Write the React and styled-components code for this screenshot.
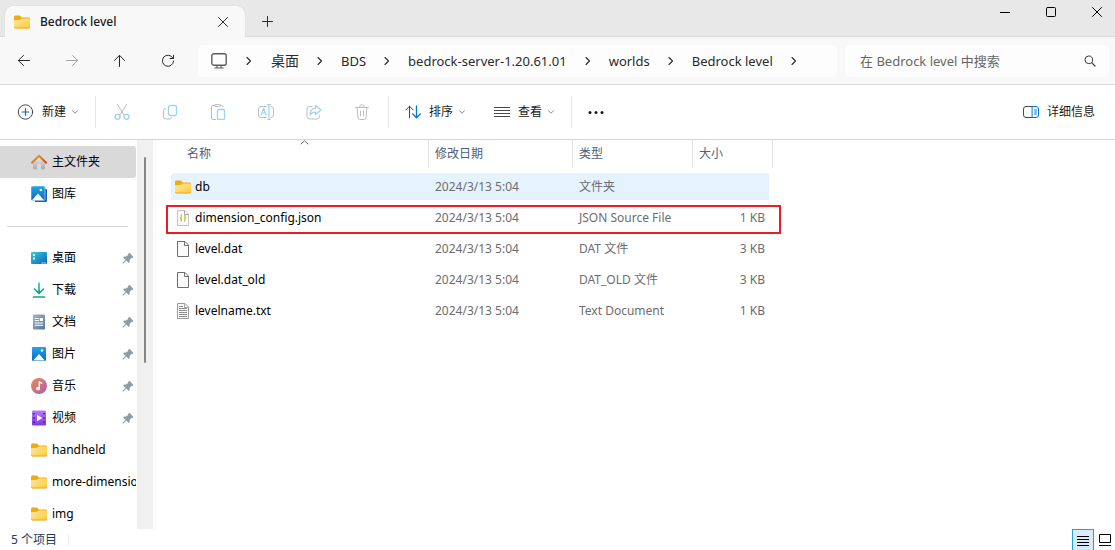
import React from "react";
import styled, { createGlobalStyle, css } from "styled-components";

const GlobalStyle = createGlobalStyle`
    * {
        box-sizing: border-box;
    }
    body {
        margin: 0;
        background: #fff;
        font-family: "Noto Sans", "Noto Sans CJK SC", sans-serif;
        font-size: 12px;
        line-height: 16px;
        color: #000;
    }
    button, input {
        font: inherit;
        color: inherit;
    }
    button {
        border: 0;
        padding: 0;
        background: none;
    }
    a {
        color: inherit;
        text-decoration: none;
    }
    svg {
        display: block;
        flex-shrink: 0;
    }
`

const Window = styled.div`
    display: flex;
    flex-direction: column;
    height: 100vh;
    overflow: hidden;
`

/* title bar */
const TitleBar = styled.header`
    display: flex;
    align-items: flex-end;
    height: 37px;
    flex-shrink: 0;
    padding-left: 5px;
    background: #e8e8e8;
    box-shadow: inset 0 -1px #dadada;
`
const Tab = styled.div`
    display: flex;
    align-items: center;
    width: 240px;
    height: 31px;
    padding: 0 16px 0 9px;
    background: #f8f8f8;
    border-radius: 8px 8px 0 0;
    box-shadow: 0 0 1px #b8b8b8;
`
const TabTitle = styled.span`
    flex: 1;
    margin-left: 10px;
    font-weight: 500;
    color: #1a1a1a;
`
const SquareButton = styled.button`
    display: flex;
    align-items: center;
    justify-content: center;
    width: 12px;
    height: 12px;
    color: #2b2b2b;
`
const NewTabButton = styled(SquareButton)`
    width: 45px;
    height: 31px;
`
const WindowControls = styled.div`
    display: flex;
    align-self: flex-start;
    gap: 10px;
    margin-left: auto;
`
const ControlButton = styled(SquareButton)`
    width: 36px;
    height: 24px;
    color: #000;
`

/* navigation */
const NavBar = styled.nav`
    display: flex;
    align-items: center;
    height: 48px;
    flex-shrink: 0;
    padding-right: 6px;
    background: #f8f8f8;
    border-bottom: 1px solid #dadada;
`
const NavButton = styled(SquareButton)`
    width: 48px;
    height: 32px;
    color: ${props => props.disabled ? "#a3a3a3" : "#2b2b2b"};
`
const AddressBar = styled.div`
    display: flex;
    align-items: center;
    flex: 1;
    height: 32px;
    margin: 0 8px 0 6px;
    padding-left: 13px;
    background: #fdfdfd;
    border-radius: 5px;
    color: #2a2a2a;
`
const Crumb = styled.a`
    font-size: ${props => props.$cjk ? 14 : 13}px;
    line-height: 20px;
    white-space: nowrap;
`
const CrumbArrow = styled.span`
    display: flex;
    justify-content: center;
    width: ${props => props.$first ? 44 : 42}px;
`
const SearchBox = styled.label`
    display: flex;
    align-items: center;
    width: 264px;
    height: 32px;
    padding: 0 13px 0 15px;
    background: #fdfdfd;
    border-radius: 5px;
`
const SearchInput = styled.input`
    flex: 1;
    min-width: 0;
    padding: 0;
    border: 0;
    outline: 0;
    background: none;
    font-size: 13px;
    line-height: 20px;
    &::placeholder {
        color: #666;
        opacity: 1;
    }
`

/* command bar */
const Toolbar = styled.div`
    display: flex;
    align-items: center;
    height: 55px;
    flex-shrink: 0;
    border-bottom: 1px solid #d6d6d6;
    color: #1a1a1a;
`
const ToolButton = styled.button`
    display: flex;
    align-items: center;
    gap: 8px;
    height: 32px;
    padding: 0 ${props => props.$right || 16}px 0 16px;
    white-space: nowrap;
`
const ToolGroup = styled.div`
    display: flex;
    padding: 0 2px;
`
const ToolIcon = styled(SquareButton)`
    width: 48px;
    height: 32px;
`
const Caret = styled.span`
    display: flex;
    margin-left: -2px;
`
const ToolDivider = styled.span`
    width: 1px;
    height: 32px;
    background: #e8e8e8;
`
const Spacer = styled.span`
    flex: 1;
`

/* body */
const Body = styled.div`
    display: flex;
    flex: 1;
    min-height: 0;
`
const Sidebar = styled.aside`
    display: flex;
    width: 156px;
    flex-shrink: 0;
    overflow: hidden;
    border-right: 1px solid #f5f5f5;
`
const SideList = styled.nav`
    width: 137px;
    padding: 6px 1px 0 0;
    overflow: hidden;
`
const SideItem = styled.a`
    display: flex;
    align-items: center;
    gap: 5px;
    height: 32px;
    padding-left: 31px;
    border-radius: 0 3px 3px 0;
    overflow: hidden;
    white-space: nowrap;
    ${props => props.$active && css`
        background: #d9d9d9;
    `}
`
const Pin = styled.span`
    margin-left: auto;
    padding-right: 2px;
`
const SideRule = styled.hr`
    height: 1px;
    margin: 16px 8px 15px 7px;
    border: 0;
    background: #d4d4d4;
`
const ScrollTrack = styled.div`
    width: 16px;
    padding: 17px 7px 0;
    background: #f0f0f0;
`
const ScrollThumb = styled.div`
    height: 206px;
    background: #868686;
    border-radius: 1px;
`

const Content = styled.main`
    flex: 1;
    min-width: 0;
    padding-left: 15px;
`
const FileTable = styled.table`
    width: 602px;
    table-layout: fixed;
    border-spacing: 0;
`
const HeadCell = styled.th`
    height: 33px;
    padding: 0 0 5px;
    width: ${props => props.$width}px;
    font-weight: 400;
    text-align: left;
    color: #4c607a;
`
const HeadLabel = styled.div`
    position: relative;
    height: 28px;
    padding-left: ${props => props.$indent || 6}px;
    line-height: 28px;
    border-right: 1px solid #e2e2e2;
`
const SortMark = styled.span`
    position: absolute;
    top: 0;
    left: 50%;
`
const FileRow = styled.tr`
    position: relative;
    td {
        background: ${props => props.$selected ? "#e5f3ff" : "transparent"};
        background-clip: padding-box;
    }
`
const Cell = styled.td`
    height: 31px;
    padding: 0 6px;
    border-bottom: 4px solid transparent;
    color: #6d6d6d;
    white-space: nowrap;
`
const NameCell = styled(Cell)`
    padding: 0 4px;
    color: #000;
    border-radius: 3px 0 0 3px;
`
const SizeCell = styled(Cell)`
    padding: 0 4px;
    border-right: 4px solid transparent;
    text-align: right;
`
const FileName = styled.span`
    display: flex;
    align-items: center;
    gap: 4px;
`
const Highlight = styled.span`
    position: absolute;
    inset: 1px -8px 1px -5px;
    border: 2px solid #ec1c24;
`

/* status bar */
const StatusBar = styled.footer`
    display: flex;
    align-items: center;
    height: 21px;
    flex-shrink: 0;
    padding-left: 11px;
    color: #1e395b;
`
const StatusDivider = styled.span`
    width: 1px;
    height: 11px;
    margin: 0 auto 0 11px;
    background: #ececec;
`
const ViewButton = styled(SquareButton)`
    width: 21px;
    height: 21px;
    color: #000;
    ${props => props.$active && css`
        width: 22px;
        background: #d9ebf7;
        border: 1px solid #26a0da;
        border-bottom: 0;
    `}
`

const Icon = ({ size = 16, width, height, children, ...rest }) => (
    <svg
        width={width || size}
        height={height || size}
        viewBox={`0 0 ${width || size} ${height || size}`}
        fill="none"
        stroke="currentColor"
        strokeLinecap="round"
        strokeLinejoin="round"
        aria-hidden="true"
        {...rest}
    >
        {children}
    </svg>
)

const FolderIcon = () => (
    <Icon stroke="none">
        <path d="M0 3a1.4 1.4 0 0 1 1.4-1.4H6L7.8 3.4H14.6A1.4 1.4 0 0 1 16 4.8V7H0z" fill="#f0ab0c" />
        <path d="M0 6.2 6.2 5.8 7.8 4.4H14.8A1.2 1.2 0 0 1 16 5.6V13a1.4 1.4 0 0 1-1.4 1.4H1.4A1.4 1.4 0 0 1 0 13z" fill="url(#folderFill)" />
        <path d="M.4 13.3c.3.5.6.7 1 .7h13.2c.4 0 .8-.2 1-.7" stroke="#e9a81c" strokeWidth="0.9" />
    </Icon>
)

const CloseIcon = () => (
    <Icon size={10}><path d="M.5.5l9 9M9.5.5l-9 9" /></Icon>
)

const ChevronRight = () => (
    <Icon width={6} height={10}><path d="M1 1.5 4.5 5 1 8.500" strokeWidth="1.1" /></Icon>
)

const ChevronDown = () => (
    <Icon size={6} stroke="#8a8a8a"><path d="M.5 1.800 3 4.2 5.5 1.8" /></Icon>
)

const PinIcon = () => (
    <Icon size={12} stroke="none" fill="#8f9aa3">
        <path d="M7.3.8 11.4 4.9 10.6 5.9 9.8 5.8 7.7 8 7.5 10.2 6.7 10.9 4.3 8.6 1.3 11.5.5 11.5.6 10.7 3.5 7.7 1.3 5.4 2 4.6 4.3 4.4 6.4 2.4 6.3 1.6z" />
    </Icon>
)

const HomeIcon = () => (
    <Icon stroke="none">
        <path d="M2 7.5 8 2.2l6 5.300V14a1.2 1.2 0 0 1-1.2 1.2H10V10.5a1 1 0 0 0-1-1H7a1 1 0 0 0-1 1v4.7H3.2A1.2 1.2 0 0 1 2 14z" fill="url(#homeFill)" />
        <path d="M.9 8.7 8 1.7l7.1 7" fill="none" stroke="url(#roofFill)" strokeWidth="1.9" />
    </Icon>
)

const GalleryIcon = () => (
    <Icon stroke="none">
        <path d="M3 2.5h11.5a1.5 1.5 0 0 1 1.5 1.5v10.5a1.5 1.5 0 0 1-1.5 1.5H4z" fill="#1c5fb4" />
        <rect width="14" height="14.5" rx="1.2" fill="url(#blueFill)" stroke="#fff" strokeWidth="0.5" />
        <path d="M1.2 14 7 7.6l5.8 6.4z" fill="#fff" />
        <circle cx="9.8" cy="4" r="1.2" fill="#fff" />
    </Icon>
)

const DesktopIcon = () => (
    <Icon stroke="none">
        <rect y="2" width="16" height="12" rx="1" fill="url(#deskFill)" />
        <path d="M2 4h2v2H2zM2 7.5h2v2H2z" fill="#fff" />
        <path d="M11 13h1.2M13.3 13h1.2" stroke="#fff" strokeWidth="0.8" />
    </Icon>
)

const DownloadIcon = () => (
    <Icon stroke="url(#downFill)" strokeWidth="1.7">
        <path d="M8.01 1v10M3.5 7 8 11.400 12.5 7" />
        <path d="M2.5 15H13.5" stroke="#10a67c" />
    </Icon>
)

const DocsIcon = () => (
    <Icon stroke="none">
        <rect x="2" y="0.5" width="12" height="15" rx="1.2" fill="url(#docFill)" />
        <path d="M4.200 4.5H7.5M4.2 6.5H7.5M4.2 9h7.6M4.2 11.2h7.6" stroke="#fff" strokeWidth="1.1" />
        <rect x="8.8" y="4" width="3.2" height="3" fill="#fff" />
    </Icon>
)

const PicturesIcon = () => (
    <Icon stroke="none">
        <rect x="1" y="1" width="14" height="14" rx="1.2" fill="url(#blueFill)" />
        <path d="M2.2 14.5 8 8l5.8 6.5z" fill="#fff" />
        <circle cx="11" cy="4.5" r="1.2" fill="#fff" />
    </Icon>
)

const MusicIcon = () => (
    <Icon stroke="none">
        <circle cx="8" cy="8" r="8" fill="url(#musicFill)" />
        <circle cx="7" cy="10.6" r="1.9" fill="#fff" />
        <path d="M8.3 10.6V3.8l2.5 1.4" stroke="#fff" strokeWidth="1.4" />
    </Icon>
)

const VideoIcon = () => (
    <Icon stroke="none">
        <rect x="1" y="0.5" width="14" height="15" rx="1.2" fill="url(#videoFill)" />
        <path d="M3 3v11M13 3v11" stroke="#4c1d95" strokeWidth="1.6" strokeDasharray="1.6 2.6" strokeLinecap="butt" />
        <path d="M6 4.8 11.3 8 6 11.2z" fill="#fff" />
    </Icon>
)

const FileIcon = ({ kind }) => {
    if (kind === "folder") return <FolderIcon />
    return (
        <Icon strokeLinejoin="miter" strokeLinecap="butt">
            <path
                d="M2.5.5H10L13.5 4V15.5H2.5z"
                fill="#fbfbfb"
                stroke={kind === "json" ? "#c3c3c3" : kind === "text" ? "#9a9a9a" : "#6e6e6e"}
            />
            <path d="M9.5.5V4.5H13.5" stroke={kind === "file" ? "#6e6e6e" : "#a8a8a8"} />
            {kind === "json" && (
                <path d="M7 5H6.2V7.2L5.5 8 6.2 8.8V11H7M9 5H9.8V7.2L10.5 8 9.8 8.8V11H9" stroke="#b8bf3c" strokeWidth="1.2" />
            )}
            {kind === "text" && (
                <path d="M4 3.5H8M4 5.5H12M4 7.5H12M4 9.5H12M4 11.5H12M4 13.5H12" stroke="#8c8c8c" />
            )}
        </Icon>
    )
}

const Gradients = () => (
    <svg width="0" height="0" style={{ position: "absolute" }} aria-hidden="true">
        <defs>
            <linearGradient id="folderFill" x1="0" y1="0" x2="1" y2="1">
                <stop stopColor="#ffe9a4" />
                <stop offset="1" stopColor="#ffc937" />
            </linearGradient>
            <linearGradient id="homeFill" x1="0" y1="0" x2="0" y2="1">
                <stop stopColor="#ececec" />
                <stop offset="1" stopColor="#a9a9a9" />
            </linearGradient>
            <linearGradient id="roofFill" x1="0" y1="0" x2="1" y2="1">
                <stop stopColor="#f9a11b" />
                <stop offset="1" stopColor="#c9481c" />
            </linearGradient>
            <linearGradient id="blueFill" x1="0" y1="0" x2="0" y2="1">
                <stop stopColor="#22a3ea" />
                <stop offset="1" stopColor="#0b6bc0" />
            </linearGradient>
            <linearGradient id="deskFill" x1="0" y1="0" x2="1" y2="1">
                <stop stopColor="#2fd0e0" />
                <stop offset="1" stopColor="#0c62b8" />
            </linearGradient>
            <linearGradient id="downFill" gradientUnits="userSpaceOnUse" x1="0" y1="1" x2="0" y2="15">
                <stop stopColor="#2ed3a0" />
                <stop offset="1" stopColor="#0a8a72" />
            </linearGradient>
            <linearGradient id="docFill" x1="0" y1="0" x2="1" y2="1">
                <stop stopColor="#9fb4c9" />
                <stop offset="1" stopColor="#56779b" />
            </linearGradient>
            <linearGradient id="musicFill" x1="0" y1="0" x2="1" y2="1">
                <stop stopColor="#f28a4f" />
                <stop offset="1" stopColor="#a95bb5" />
            </linearGradient>
            <linearGradient id="videoFill" x1="0" y1="0" x2="0" y2="1">
                <stop stopColor="#b57af5" />
                <stop offset="1" stopColor="#7f38dc" />
            </linearGradient>
        </defs>
    </svg>
)

const crumbs = ["桌面", "BDS", "bedrock-server-1.20.61.01", "worlds", "Bedrock level"]

const places = [
    { name: "桌面", icon: <DesktopIcon />, pinned: true },
    { name: "下载", icon: <DownloadIcon />, pinned: true },
    { name: "文档", icon: <DocsIcon />, pinned: true },
    { name: "图片", icon: <PicturesIcon />, pinned: true },
    { name: "音乐", icon: <MusicIcon />, pinned: true },
    { name: "视频", icon: <VideoIcon />, pinned: true },
    { name: "handheld", icon: <FolderIcon /> },
    { name: "more-dimensions", icon: <FolderIcon /> },
    { name: "img", icon: <FolderIcon /> },
]

const files = [
    { name: "db", kind: "folder", type: "文件夹", size: "", selected: true },
    { name: "dimension_config.json", kind: "json", type: "JSON Source File", size: "1 KB", marked: true },
    { name: "level.dat", kind: "file", type: "DAT 文件", size: "3 KB" },
    { name: "level.dat_old", kind: "file", type: "DAT_OLD 文件", size: "3 KB" },
    { name: "levelname.txt", kind: "text", type: "Text Document", size: "1 KB" },
]

const blue = "#9fd0f5"
const grey = "#bdbdbd"

const fileActions = [
    {
        label: "剪切",
        icon: (
            <Icon stroke={grey}>
                <path d="M3.5.5 10 11M12.5.5 6 11" />
                <circle cx="3.5" cy="12.8" r="2.5" stroke={blue} strokeWidth="1.3" />
                <circle cx="12.5" cy="12.8" r="2.5" stroke={blue} strokeWidth="1.3" />
            </Icon>
        ),
    },
    {
        label: "复制",
        icon: (
            <Icon stroke={grey}>
                <path d="M3.5 4.5a2 2 0 0 0-2 2v6a2.5 2.5 0 0 0 2.5 2.5H8a2 2 0 0 0 1.8-1.5" />
                <rect x="6.5" y="1.5" width="8" height="10" rx="2" stroke={blue} strokeWidth="1.3" />
            </Icon>
        ),
    },
    {
        label: "粘贴",
        icon: (
            <Icon stroke={grey}>
                <path d="M5 1.5H3a1.5 1.5 0 0 0-1.5 1.5V14a1.5 1.5 0 0 0 1.5 1.5H5.5M10 1.5h1.5A1.5 1.5 0 0 1 13 3" />
                <rect x="4.5" y="0.5" width="6" height="2" rx="1" />
                <rect x="7.5" y="5.5" width="7" height="10" rx="1.3" stroke={blue} strokeWidth="1.3" />
            </Icon>
        ),
    },
    {
        label: "重命名",
        icon: (
            <Icon stroke={grey}>
                <path d="M8.5 2.5H3a2.5 2.5 0 0 0-2.5 2.5v6A2.5 2.5 0 0 0 3 13.5H8.5M13 2.5a2.5 2.5 0 0 1 2.5 2.5v6a2.5 2.5 0 0 1-2.5 2.5" />
                <path d="M3 11 5.6 4.5 8.2 11M4 9H7.3M9.5.5H12.5M11 .5V15.5M9.5 15.5H12.5" stroke={blue} strokeWidth="1.2" />
            </Icon>
        ),
    },
    {
        label: "共享",
        icon: (
            <Icon stroke={grey}>
                <path d="M6 2.5H3.5A2.5 2.5 0 0 0 1 5v7.5A2.5 2.5 0 0 0 3.5 15H11a2.5 2.5 0 0 0 2.5-2.5V11.5" />
                <path d="M9.5 1.5 15 6 9.5 10.5V8C7 8 5.3 8.8 4 11 4 7 6 4.5 9.5 4.2z" stroke={blue} strokeWidth="1.2" />
            </Icon>
        ),
    },
    {
        label: "删除",
        icon: (
            <Icon stroke={grey}>
                <path d="M1.5 3.5H14.5M5.5 3.2a2.5 2.5 0 0 1 5 0M3 3.5 4 13.8A1.8 1.8 0 0 0 5.8 15.5H10.2A1.8 1.8 0 0 0 12 13.8L13 3.5M6.5 7V12M9.5 7V12" />
            </Icon>
        ),
    },
]

const App = () => {
    return (
        <Window>
            <GlobalStyle />
            <Gradients />
            <TitleBar>
                <Tab>
                    <FolderIcon />
                    <TabTitle>Bedrock level</TabTitle>
                    <SquareButton aria-label="关闭标签页"><CloseIcon /></SquareButton>
                </Tab>
                <NewTabButton aria-label="新标签页">
                    <Icon size={11}><path d="M5.5.5V10.5M.5 5.5H10.5" /></Icon>
                </NewTabButton>
                <WindowControls>
                    <ControlButton aria-label="最小化">
                        <Icon size={10}><path d="M0 5.5H10" strokeLinecap="butt" /></Icon>
                    </ControlButton>
                    <ControlButton aria-label="最大化">
                        <Icon size={10}><rect x="0.5" y="0.5" width="9" height="9" rx="1" /></Icon>
                    </ControlButton>
                    <ControlButton aria-label="关闭"><CloseIcon /></ControlButton>
                </WindowControls>
            </TitleBar>

            <NavBar>
                <NavButton aria-label="后退">
                    <Icon><path d="M13.5 7.5H2.5M7.5 2.5 2.3 7.5 7.500 12.5" /></Icon>
                </NavButton>
                <NavButton aria-label="前进" disabled>
                    <Icon><path d="M2.5 7.5H13.5M8.5 2.5 13.7 7.5 8.5 12.5" /></Icon>
                </NavButton>
                <NavButton aria-label="上移">
                    <Icon><path d="M7.5 13.5V2.5M2.5 7.500 7.5 2.3 12.5 7.5" /></Icon>
                </NavButton>
                <NavButton aria-label="刷新">
                    <Icon><path d="M13 5.2A5.6 5.6 0 1 0 13.6 8M13.5 2.2V5.5H10" /></Icon>
                </NavButton>
                <AddressBar>
                    <Icon stroke="#5c5c5c">
                        <rect x="0.8" y="0.8" width="14.4" height="11.4" rx="2" strokeWidth="1.4" />
                        <path d="M6 12.5V14.5M10 12.5V14.5M3.8 15H12.2" strokeWidth="1.2" />
                    </Icon>
                    <CrumbArrow $first><ChevronRight /></CrumbArrow>
                    {crumbs.map(name => (
                        <React.Fragment key={name}>
                            <Crumb href="#" $cjk={name === "桌面"}>{name}</Crumb>
                            <CrumbArrow><ChevronRight /></CrumbArrow>
                        </React.Fragment>
                    ))}
                </AddressBar>
                <SearchBox>
                    <SearchInput type="text" aria-label="搜索" placeholder="在 Bedrock level 中搜索" />
                    <Icon size={12} stroke="#3c3c3c">
                        <circle cx="4.8" cy="4.8" r="3.8" />
                        <path d="M7.6 7.6 11 11" strokeWidth="1.2" />
                    </Icon>
                </SearchBox>
            </NavBar>

            <Toolbar>
                <ToolButton $right={17}>
                    <Icon stroke="#4a4a4a" width={18} height={16}>
                        <circle cx="9.5" cy="8" r="7.2" />
                        <path d="M9.5 4.7V11.3M6.2 8H12.8" stroke="#0f6cbd" strokeWidth="1.2" />
                    </Icon>
                    新建
                    <Caret><ChevronDown /></Caret>
                </ToolButton>
                <ToolDivider />
                <ToolGroup>
                    {fileActions.map(action => (
                        <ToolIcon key={action.label} aria-label={action.label} disabled>{action.icon}</ToolIcon>
                    ))}
                </ToolGroup>
                <ToolDivider />
                <ToolButton $right={13}>
                    <Icon>
                        <path d="M4.5 14V2.2M.8 6 4.5 2.2 8.2 6" stroke="#4a4a4a" />
                        <path d="M11.5 2V13.8M7.8 10 11.5 13.8 15.2 10" stroke="#0078d4" strokeWidth="1.3" />
                    </Icon>
                    排序
                    <Caret><ChevronDown /></Caret>
                </ToolButton>
                <ToolButton $right={17}>
                    <Icon stroke="#4a4a4a" strokeLinecap="butt">
                        <path d="M0 3.5H16M0 6.5H16M0 9.5H16M0 12.5H16" />
                    </Icon>
                    查看
                    <Caret><ChevronDown /></Caret>
                </ToolButton>
                <ToolDivider />
                <ToolButton aria-label="查看更多">
                    <Icon stroke="none" fill="#1a1a1a">
                        <circle cx="2" cy="8.5" r="1.5" />
                        <circle cx="8" cy="8.5" r="1.5" />
                        <circle cx="14" cy="8.5" r="1.5" />
                    </Icon>
                </ToolButton>
                <Spacer />
                <ToolButton $right={20}>
                    <Icon stroke="#4a4a4a">
                        <path d="M9.5 2.5H3A2.5 2.5 0 0 0 .5 5v6A2.5 2.5 0 0 0 3 13.5H9.5" />
                        <path d="M9.5 2.5H13A2.5 2.5 0 0 1 15.5 5v6a2.5 2.5 0 0 1-2.5 2.5H9.5zM11.5 6H13.5M11.5 8H13.5M11.5 10H13.5" stroke="#0078d4" />
                    </Icon>
                    详细信息
                </ToolButton>
            </Toolbar>

            <Body>
                <Sidebar>
                    <SideList>
                        <SideItem href="#" $active><HomeIcon />主文件夹</SideItem>
                        <SideItem href="#"><GalleryIcon />图库</SideItem>
                        <SideRule />
                        {places.map(place => (
                            <SideItem href="#" key={place.name}>
                                {place.icon}
                                {place.name}
                                {place.pinned && <Pin><PinIcon /></Pin>}
                            </SideItem>
                        ))}
                    </SideList>
                    <ScrollTrack><ScrollThumb /></ScrollTrack>
                </Sidebar>
                <Content>
                    <FileTable>
                        <thead>
                            <tr>
                                <HeadCell $width={258}>
                                    <HeadLabel $indent={16}>
                                        名称
                                        <SortMark>
                                            <Icon width={9} height={5} stroke="#6d6d6d"><path d="M1 4 4.5.8 8 4" /></Icon>
                                        </SortMark>
                                    </HeadLabel>
                                </HeadCell>
                                <HeadCell $width={144}><HeadLabel>修改日期</HeadLabel></HeadCell>
                                <HeadCell $width={120}><HeadLabel>类型</HeadLabel></HeadCell>
                                <HeadCell $width={80}><HeadLabel>大小</HeadLabel></HeadCell>
                            </tr>
                        </thead>
                        <tbody>
                            {files.map(file => (
                                <FileRow key={file.name} $selected={file.selected}>
                                    <NameCell>
                                        <FileName><FileIcon kind={file.kind} />{file.name}</FileName>
                                        {file.marked && <Highlight />}
                                    </NameCell>
                                    <Cell>2024/3/13 5:04</Cell>
                                    <Cell>{file.type}</Cell>
                                    <SizeCell>{file.size}</SizeCell>
                                </FileRow>
                            ))}
                        </tbody>
                    </FileTable>
                </Content>
            </Body>

            <StatusBar>
                5 个项目
                <StatusDivider />
                <ViewButton aria-label="详细信息视图" $active>
                    <Icon size={12} strokeLinecap="butt"><path d="M0 2.5H12M0 5.5H12M0 8.5H12M0 11.5H12" /></Icon>
                </ViewButton>
                <ViewButton aria-label="大图标视图">
                    <Icon size={12} strokeLinejoin="miter" strokeLinecap="butt"><path d="M.5.5H11.5V8.5H.5zM0 11.5H12" /></Icon>
                </ViewButton>
            </StatusBar>
        </Window>
    )
}

export default App;
